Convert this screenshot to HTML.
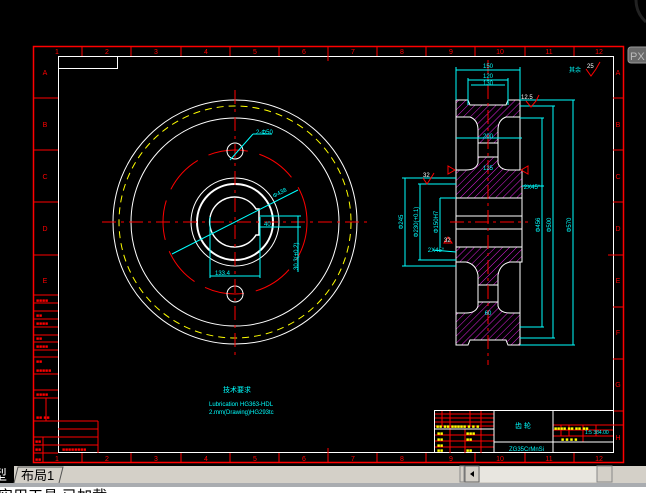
<!DOCTYPE html>
<html><head><meta charset="utf-8"><style>
html,body{margin:0;padding:0;background:#000;width:646px;height:493px;overflow:hidden}
svg{display:block}
text{font-family:"Liberation Sans","Noto Sans CJK SC",sans-serif}
</style></head><body>
<svg width="646" height="493" viewBox="0 0 646 493" xmlns="http://www.w3.org/2000/svg">
<defs>
<pattern id="h" width="5" height="5" patternUnits="userSpaceOnUse" patternTransform="rotate(45)">
<line x1="0" y1="0" x2="0" y2="5" stroke="#e020e0" stroke-width="1"/>
</pattern>
</defs>
<rect width="646" height="493" fill="#000"/>
<!-- PX button -->
<rect x="628" y="47" width="22" height="16" rx="3" fill="#6a6a6a" stroke="#999"/>
<text x="630" y="60" font-size="11" fill="#bbb">PX</text>
<path d="M636 0 A30 30 0 0 0 646 22" stroke="#222" stroke-width="3" fill="none"/>

<!-- frames -->
<rect x="33.5" y="46.5" width="590" height="416" fill="none" stroke="#f00" stroke-width="1.5"/>
<rect x="58.5" y="56.5" width="555" height="396" fill="none" stroke="#fff"/>
<rect x="58.5" y="56.5" width="59" height="12" fill="none" stroke="#fff"/>
<g stroke="#f00" stroke-width="1">
<line x1="82" y1="47" x2="82" y2="56"/><line x1="131" y1="47" x2="131" y2="56"/><line x1="181" y1="47" x2="181" y2="56"/><line x1="230" y1="47" x2="230" y2="56"/><line x1="279" y1="47" x2="279" y2="56"/><line x1="328" y1="47" x2="328" y2="61"/><line x1="377" y1="47" x2="377" y2="56"/><line x1="426" y1="47" x2="426" y2="56"/><line x1="475" y1="47" x2="475" y2="56"/><line x1="525" y1="47" x2="525" y2="56"/><line x1="574" y1="47" x2="574" y2="56"/>
<line x1="82" y1="453" x2="82" y2="463"/><line x1="131" y1="453" x2="131" y2="463"/><line x1="181" y1="453" x2="181" y2="463"/><line x1="230" y1="453" x2="230" y2="463"/><line x1="279" y1="453" x2="279" y2="463"/><line x1="328" y1="448" x2="328" y2="463"/><line x1="377" y1="453" x2="377" y2="463"/><line x1="426" y1="453" x2="426" y2="463"/><line x1="475" y1="453" x2="475" y2="463"/><line x1="525" y1="453" x2="525" y2="463"/><line x1="574" y1="453" x2="574" y2="463"/>
<line x1="613" y1="98" x2="624" y2="98"/><line x1="613" y1="150" x2="624" y2="150"/><line x1="613" y1="202" x2="624" y2="202"/><line x1="608" y1="255" x2="624" y2="255"/><line x1="613" y1="307" x2="624" y2="307"/><line x1="613" y1="359" x2="624" y2="359"/><line x1="613" y1="411" x2="624" y2="411"/>
<line x1="33" y1="98" x2="58" y2="98"/><line x1="33" y1="150" x2="58" y2="150"/><line x1="33" y1="202" x2="58" y2="202"/><line x1="33" y1="255" x2="58" y2="255"/>
<line x1="33" y1="295" x2="58" y2="295"/><line x1="33" y1="303" x2="58" y2="303"/><line x1="33" y1="311" x2="58" y2="311"/><line x1="33" y1="319" x2="58" y2="319"/><line x1="33" y1="327" x2="58" y2="327"/><line x1="33" y1="335" x2="58" y2="335"/><line x1="33" y1="342" x2="58" y2="342"/><line x1="33" y1="350" x2="58" y2="350"/><line x1="33" y1="357" x2="58" y2="357"/><line x1="33" y1="374" x2="58" y2="374"/><line x1="33" y1="390" x2="58" y2="390"/><line x1="33" y1="398" x2="58" y2="398"/><line x1="33" y1="421" x2="58" y2="421"/><line x1="33" y1="437" x2="58" y2="437"/><line x1="33" y1="445" x2="58" y2="445"/><line x1="33" y1="453" x2="58" y2="453"/>
<line x1="46" y1="398" x2="46" y2="421"/><line x1="43" y1="437" x2="43" y2="463"/>
<line x1="58" y1="421" x2="98" y2="421"/><line x1="58" y1="429" x2="98" y2="429"/><line x1="58" y1="437" x2="98" y2="437"/><line x1="58" y1="445" x2="98" y2="445"/><line x1="98" y1="421" x2="98" y2="453"/>
</g>
<g fill="#f00" font-size="7" text-anchor="middle">
<text x="57" y="54">1</text><text x="107" y="54">2</text><text x="156" y="54">3</text><text x="206" y="54">4</text><text x="255" y="54">5</text><text x="304" y="54">6</text><text x="353" y="54">7</text><text x="402" y="54">8</text><text x="451" y="54">9</text><text x="500" y="54">10</text><text x="549" y="54">11</text><text x="599" y="54">12</text>
<text x="57" y="461">1</text><text x="107" y="461">2</text><text x="156" y="461">3</text><text x="206" y="461">4</text><text x="255" y="461">5</text><text x="304" y="461">6</text><text x="353" y="461">7</text><text x="402" y="461">8</text><text x="451" y="461">9</text><text x="500" y="461">10</text><text x="549" y="461">11</text><text x="599" y="461">12</text>
<text x="45" y="75">A</text><text x="45" y="127">B</text><text x="45" y="179">C</text><text x="45" y="231">D</text><text x="45" y="283">E</text>
<text x="618" y="75">A</text><text x="618" y="127">B</text><text x="618" y="179">C</text><text x="618" y="231">D</text><text x="618" y="283">E</text><text x="618" y="335">F</text><text x="618" y="387">G</text><text x="618" y="440">H</text>
</g>
<g fill="#f00" font-size="5">
<text x="36" y="302">■■■■</text><text x="36" y="317">■■</text><text x="36" y="325">■■■■</text><text x="36" y="340">■■</text><text x="36" y="348">■■■■</text><text x="36" y="363">■■</text><text x="36" y="372">■■■■■</text><text x="36" y="396">■■■■</text><text x="36" y="419">■■ ■■</text><text x="35" y="443">■■</text><text x="35" y="451">■■</text><text x="35" y="461">■■</text><text x="62" y="451">■■■■■■■■</text>
</g>

<!-- left circular view -->
<g fill="none">
<circle cx="235" cy="222" r="122" stroke="#fff"/>
<circle cx="235" cy="222" r="116" stroke="#ff0" stroke-dasharray="7 5"/>
<circle cx="235" cy="222" r="104" stroke="#fff"/>
<circle cx="235" cy="222" r="72" stroke="#f00" stroke-dasharray="40 12"/>
<circle cx="235" cy="222" r="44" stroke="#fff"/>
<circle cx="235" cy="222" r="38" stroke="#fff" stroke-width="2"/>
<path d="M256 209 A25 25 0 1 0 256 235 L259 235 L259 209 Z" stroke="#fff" stroke-width="1.5"/>
<circle cx="235" cy="151" r="8" stroke="#fff"/>
<circle cx="235" cy="294" r="8" stroke="#fff"/>
<g stroke="#f00">
<line x1="102" y1="222" x2="370" y2="222" stroke-dasharray="14 5 3 5"/>
<line x1="235" y1="90" x2="235" y2="360" stroke-dasharray="14 5 3 5"/>
</g>
<g stroke="#0ff">
<line x1="172" y1="254" x2="298" y2="190"/>
<line x1="230" y1="160" x2="253" y2="134"/><line x1="253" y1="134" x2="272" y2="134"/>
<line x1="210" y1="217" x2="210" y2="278"/><line x1="260" y1="217" x2="260" y2="278"/><line x1="210" y1="276" x2="260" y2="276"/>
<line x1="260" y1="216" x2="301" y2="216"/><line x1="260" y1="227" x2="301" y2="227"/><line x1="298" y1="216" x2="298" y2="272"/>
</g>
</g>
<g fill="#0ff" font-size="6">
<text x="256" y="134">2-Φ50</text>
<text x="274" y="198" transform="rotate(-28 274 198)">Φ438</text>
<text x="215" y="275">133.4</text>
<text x="264" y="226">40</text>
<text x="298" y="270" transform="rotate(-90 298 270)">30.3(+0.2)</text>
<text x="223" y="392" font-size="7">技术要求</text>
<text x="209" y="406">Lubrication HG363-HDL</text>
<text x="209" y="414">2.mm(Drawing)HG293tc</text>
</g>

<!-- right section view -->
<g stroke="#fff" stroke-width="1">
<path d="M456 100 L468 100 L470 105 L506 105 L508 100 L520 100 L520 117 L506 117 Q498 120 498 130 L498 143 L478 143 L478 130 Q478 120 470 117 L456 117 Z" fill="url(#h)"/>
<path d="M478 157 L498 157 L498 163 Q500 170 510 170 L522 170 L522 198 L456 198 L456 170 L466 170 Q476 170 478 163 Z" fill="url(#h)"/>
<path d="M456 247 L522 247 L522 262 L510 262 Q500 264 498 275 L498 285 L478 285 L478 275 Q476 264 466 262 L456 262 Z" fill="url(#h)"/>
<path d="M478 302 L498 302 L498 306 Q500 313 510 313 L520 313 L520 345 L508 345 L506 340 L470 340 L468 345 L456 345 L456 313 L466 313 Q476 313 478 306 Z" fill="url(#h)"/>
<rect x="478" y="143" width="20" height="14" fill="none"/>
<rect x="478" y="285" width="20" height="17" fill="none"/>
<line x1="456" y1="117" x2="456" y2="170"/><line x1="520" y1="117" x2="520" y2="170"/>
<line x1="456" y1="262" x2="456" y2="313"/><line x1="520" y1="262" x2="520" y2="313"/>
<line x1="456" y1="198" x2="456" y2="247"/><line x1="522" y1="198" x2="522" y2="247"/>
<line x1="456" y1="216" x2="522" y2="216"/><line x1="456" y1="229" x2="522" y2="229"/>
</g>
<g stroke="#f00">
<line x1="488" y1="60" x2="488" y2="365" stroke-dasharray="14 4 3 4"/>
<line x1="450" y1="222" x2="528" y2="222" stroke-dasharray="14 4 3 4"/>
</g>
<g stroke="#0ff" fill="none">
<line x1="456" y1="70" x2="520" y2="70"/><line x1="456" y1="67" x2="456" y2="100"/><line x1="520" y1="67" x2="520" y2="100"/>
<line x1="468" y1="80" x2="508" y2="80"/><line x1="468" y1="78" x2="468" y2="105"/><line x1="508" y1="78" x2="508" y2="105"/>
<line x1="471" y1="85" x2="505" y2="85"/>
<line x1="520" y1="100" x2="575" y2="100"/><line x1="573" y1="100" x2="573" y2="345"/><line x1="520" y1="345" x2="575" y2="345"/>
<line x1="520" y1="106" x2="555" y2="106"/><line x1="553" y1="106" x2="553" y2="338"/><line x1="520" y1="338" x2="555" y2="338"/>
<line x1="520" y1="118" x2="544" y2="118"/><line x1="542" y1="118" x2="542" y2="327"/><line x1="520" y1="327" x2="544" y2="327"/>
<line x1="456" y1="138" x2="522" y2="138"/>
<line x1="402" y1="178" x2="456" y2="178"/><line x1="405" y1="178" x2="405" y2="266"/><line x1="402" y1="266" x2="456" y2="266"/>
<line x1="418" y1="184" x2="456" y2="184"/><line x1="420" y1="184" x2="420" y2="260"/><line x1="418" y1="260" x2="456" y2="260"/>
<line x1="440" y1="198" x2="456" y2="198"/><line x1="440" y1="198" x2="440" y2="247"/>
<line x1="522" y1="186" x2="544" y2="186"/>
<line x1="433" y1="250" x2="456" y2="252"/>
</g>
<g fill="#0ff" font-size="6" text-anchor="middle">
<text x="488" y="68">150</text><text x="488" y="78">120</text><text x="488" y="85">130</text>
<text x="488" y="138">200</text><text x="488" y="170">125</text><text x="488" y="315">60</text>
<text x="532" y="189">2X45°</text><text x="436" y="252">2X45°</text>
<text x="571" y="225" transform="rotate(-90 571 225)">Φ570</text>
<text x="551" y="225" transform="rotate(-90 551 225)">Φ500</text>
<text x="540" y="225" transform="rotate(-90 540 225)">Φ456</text>
<text x="403" y="222" transform="rotate(-90 403 222)">Φ245</text>
<text x="418" y="222" transform="rotate(-90 418 222)">Φ230(+0.1)</text>
<text x="438" y="222" transform="rotate(-90 438 222)">Φ150H7</text>
<text x="575" y="72">其余</text>
</g>
<g stroke="#f00" fill="none">
<path d="M586 69 L591 76 L596 69 L600 62"/><path d="M526 101 L531 107 L536 101 L539 95"/><path d="M423 178 L427 184 L431 178 L434 173"/>
<path d="M455 170 L448 166 L448 174 Z"/><path d="M521 170 L528 166 L528 174 Z"/>
<path d="M448 237 L444 243 L452 243 Z"/>
</g>
<g font-size="6" fill="#fff"><text x="587" y="68">25</text><text x="521" y="99">12.5</text><text x="423" y="177">32</text><text x="444" y="242">32</text></g>

<!-- title block -->
<rect x="434.5" y="410.5" width="179" height="42" fill="none" stroke="#fff"/>
<g stroke="#f00">
<line x1="435" y1="414" x2="494" y2="414"/><line x1="435" y1="418" x2="494" y2="418"/><line x1="435" y1="422" x2="494" y2="422"/><line x1="435" y1="426" x2="494" y2="426"/>
<line x1="435" y1="435" x2="494" y2="435"/><line x1="435" y1="441" x2="494" y2="441"/><line x1="435" y1="447" x2="494" y2="447"/>
<line x1="442" y1="411" x2="442" y2="426"/><line x1="450" y1="411" x2="450" y2="453"/><line x1="470" y1="411" x2="470" y2="426"/><line x1="481" y1="411" x2="481" y2="453"/><line x1="465" y1="429" x2="465" y2="453"/>
<line x1="553" y1="425" x2="624" y2="425"/><line x1="553" y1="430" x2="613" y2="430"/><line x1="553" y1="436" x2="613" y2="436"/>
<line x1="561" y1="425" x2="561" y2="436"/><line x1="569" y1="425" x2="569" y2="436"/><line x1="583" y1="425" x2="583" y2="442"/><line x1="596" y1="425" x2="596" y2="436"/>
</g>
<g stroke="#fff"><line x1="435" y1="429" x2="494" y2="429"/><line x1="494" y1="411" x2="494" y2="453"/><line x1="553" y1="411" x2="553" y2="453"/><line x1="494" y1="442" x2="553" y2="442"/><line x1="553" y1="442" x2="613" y2="442"/></g>
<g fill="#ff0" font-size="5"><text x="436" y="428">■■ ■■ ■■■■■ ■ ■ ■</text><text x="437" y="435">■■</text><text x="466" y="435">■■■</text><text x="437" y="441">■■</text><text x="466" y="441">■■</text><text x="437" y="447">■■</text><text x="437" y="452">■■</text><text x="466" y="452">■■</text><text x="554" y="430">■■■■ ■■ ■■ ■■</text><text x="561" y="441">■ ■ ■ ■</text></g>
<g fill="#0ff" font-size="7"><text x="515" y="428">齿 轮</text><text x="509" y="451" font-size="6">ZG35CrMnSi</text><text x="585" y="434" font-size="5">1:5 384.00</text></g>

<!-- tab bar -->
<rect x="0" y="466" width="646" height="17" fill="#d4d0c8"/>
<rect x="0" y="466" width="14" height="17" fill="#000"/>
<text x="-7" y="480" font-size="14" fill="#fff">型</text>
<path d="M14 483 L18 467 L63 467 L59 483" fill="#d4d0c8" stroke="#555"/>
<text x="21" y="480" font-size="13" fill="#000">布局1</text>
<rect x="460" y="466" width="4" height="16" fill="#d4d0c8" stroke="#888"/>
<rect x="465" y="466" width="14" height="16" fill="#d4d0c8" stroke="#666"/>
<path d="M474 471 L470 474 L474 477 Z" fill="#000"/>
<rect x="480" y="467" width="132" height="15" fill="#e8e6e0"/>
<rect x="597" y="466" width="15" height="16" fill="#d4d0c8" stroke="#888"/>
<rect x="0" y="483" width="646" height="4" fill="#a9acb0"/>
<rect x="0" y="487" width="646" height="6" fill="#fff"/>
<text x="-2" y="501" font-size="15" fill="#000">实用工具 已加载</text>
</svg>
</body></html>
